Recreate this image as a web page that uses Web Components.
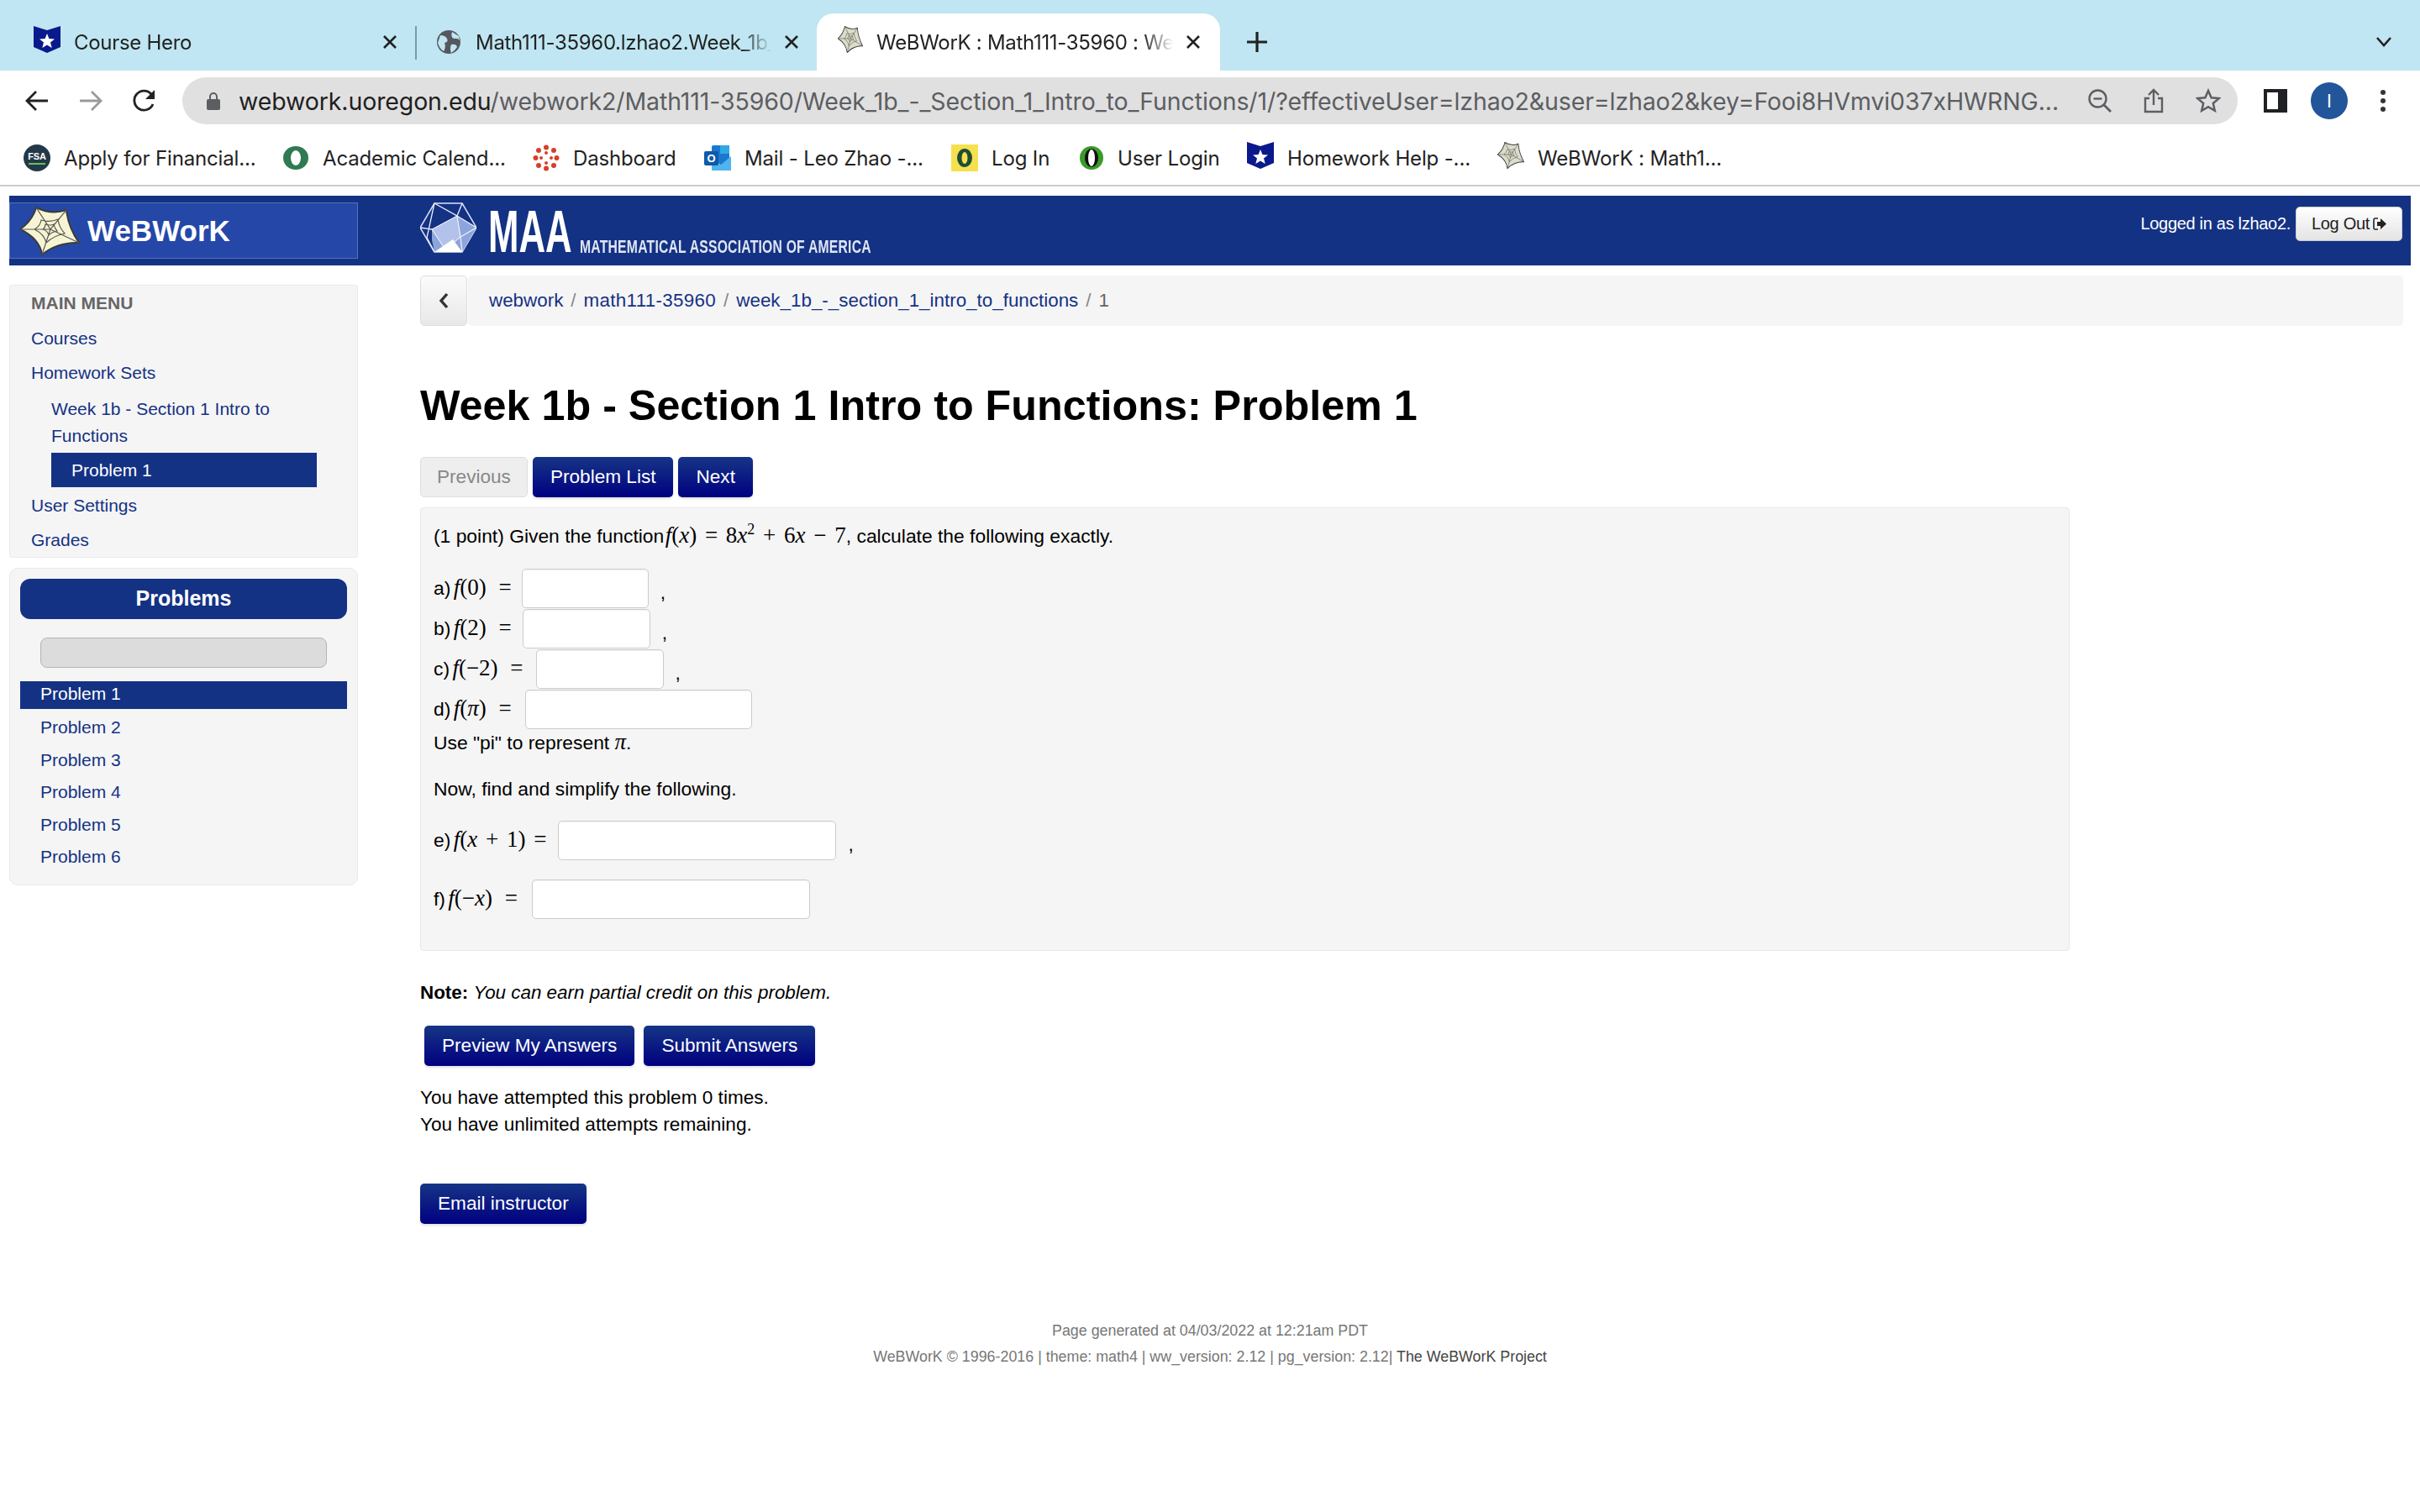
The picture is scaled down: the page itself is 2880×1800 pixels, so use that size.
<!DOCTYPE html>
<html>
<head>
<meta charset="utf-8">
<title>WeBWorK : Math111-35960</title>
<style>
  html, body { margin: 0; background: #fff; font-family: "Liberation Sans", Arial, sans-serif; }
  body { width: 2880px; height: 1800px; overflow: hidden; }
  .page { display: flex; flex-direction: column; }
</style>
</head>
<body>
<div class="page">
  <browser-tabs></browser-tabs>
  <browser-toolbar></browser-toolbar>
  <browser-bookmarks></browser-bookmarks>
  <ww-header></ww-header>
  <ww-layout>
    <ww-sidebar slot="side"></ww-sidebar>
    <ww-problem></ww-problem>
  </ww-layout>
  <ww-footer></ww-footer>
</div>

<script>
// small shared icons, used from several shadow roots
const SHIELD = `<svg width="32" height="32" viewBox="0 0 32 32"><path d="M0 0 L16 5 L32 0 V25 L16 32 L0 25 Z" fill="#0a1a8c"/><path d="M16 9 L18.4 15 L25 15.4 L20 19.4 L21.7 26 L16 22.4 L10.3 26 L12 19.4 L7 15.4 L13.6 15 Z" fill="#fff"/></svg>`;
const STAR = (w, h, fill = "#f6f4d4") => `<svg width="${w}" height="${h}" viewBox="0 0 72 58" preserveAspectRatio="none"><path d="M20 1 Q38 10 56 4 Q58 24 71 43 Q46 42 27 57 Q24 38 1 27 Q16 16 20 1 Z" fill="${fill}" stroke="#3b3b3b" stroke-width="2"/><path d="M20 1 L37 27 L56 4 M37 27 L71 43 M37 27 L27 57 M37 27 L1 27 M26 16 Q37 19 46 15 Q47 24 54 32 Q42 34 32 43 Q30 33 18 27 Q25 23 26 16 Z M31 21 Q37 23 41 21 Q42 26 45 29 Q39 30 35 34 Q34 29 28 27 Q31 25 31 21 Z" fill="none" stroke="#5a5a50" stroke-width="1.2"/></svg>`;

class BrowserTab extends HTMLElement {
  constructor() {
    super();
    this.attachShadow({ mode: "open" });
    this.shadowRoot.innerHTML = `
      <style>
        :host { display: flex; align-items: center; box-sizing: border-box; height: 68px; font: 24px Inter, sans-serif; color: #222; position: relative; }
        :host([active]) { background: #fff; border-radius: 20px 20px 0 0; }
        .text { flex: 1; margin-left: 16px; white-space: nowrap; overflow: hidden; letter-spacing: -0.3px; -webkit-mask-image: linear-gradient(90deg, #000 calc(100% - 36px), transparent); }
        svg.x { flex: none; margin-left: 14px; }
      </style>
      <slot name="icon"></slot>
      <div class="text"><slot></slot></div>
      <svg class="x" width="20" height="20" viewBox="0 0 20 20"><path d="M3 3 L17 17 M17 3 L3 17" stroke="#222" stroke-width="2.6"/></svg>
    `;
  }
}
customElements.define("browser-tab", BrowserTab);

class BrowserTabs extends HTMLElement {
  constructor() {
    super();
    this.attachShadow({ mode: "open" });
    this.shadowRoot.innerHTML = `
      <style>
        :host { display: flex; box-sizing: border-box; height: 84px; padding-top: 16px; background: #bfe6f2; align-items: stretch; position: relative; }
        .t1 { width: 434px; margin-left: 40px; }
        .sep { width: 2px; height: 40px; margin: 15px 24px 0 20px; background: #7d9aa3; flex: none; }
        .t2 { width: 432px; }
        .t3 { width: 480px; margin-left: 20px; padding: 0 22px 0 25px; }
        .plus { margin: 20px 0 0 30px; width: 28px; height: 28px; }
        .chev { margin: 27px 0 0 1317px; }
      </style>
      <browser-tab class="t1"><span slot="icon">${SHIELD}</span>Course Hero</browser-tab>
      <div class="sep"></div>
      <browser-tab class="t2"><svg slot="icon" width="28" height="28" viewBox="0 0 28 28" style="margin-right:2px"><circle cx="14" cy="14" r="14" fill="#55585e"/><path d="M4 6 Q10 6 12 10 Q14 14 9 15 Q11 20 8 25 Q3 22 1 15 Z M18 2 Q16 8 20 10 Q25 9 27 12 L26 7 Z M17 17 Q23 16 24 20 Q21 25 17 27 Q15 22 17 17 Z" fill="#bfe6f2"/></svg>Math111-35960.lzhao2.Week_1b_-_Section_1</browser-tab>
      <browser-tab class="t3" active><span slot="icon">${STAR(30, 32, "#dcdccb")}</span>WeBWorK : Math111-35960 : Week_1b_-_Section</browser-tab>
      <svg class="plus" viewBox="0 0 28 28"><path d="M14 2 V26 M2 14 H26" stroke="#222" stroke-width="3.2"/></svg>
      <svg class="chev" width="20" height="14" viewBox="0 0 20 14"><path d="M2 2 L10 11 L18 2" fill="none" stroke="#222" stroke-width="2.6"/></svg>
    `;
  }
}
customElements.define("browser-tabs", BrowserTabs);

class BrowserToolbar extends HTMLElement {
  constructor() {
    super();
    this.attachShadow({ mode: "open" });
    this.shadowRoot.innerHTML = `
      <style>
        :host { display: flex; align-items: center; height: 72px; box-sizing: border-box; padding: 0 0 0 30px; background: #fff; }
        .nav { display: flex; gap: 36px; width: 187px; align-items: center; flex: none; }
        .bar { width: 2446px; height: 56px; flex: none; box-sizing: border-box; border-radius: 28px; background: #e0e0e0; display: flex; align-items: center; padding-left: 29px; font: 28.5px Inter, sans-serif; color: #5c5e62; white-space: nowrap; }
        .bar b { font-weight: 400; color: #1f1f1f; }
        .url { margin-left: 22px; width: 2166px; overflow: hidden; letter-spacing: -0.11px; flex: none; }
        .end { display: flex; align-items: center; gap: 38px; margin-left: 35px; flex: none; }
        .right { display: flex; align-items: center; margin-left: 31px; }
        .avatar { width: 44px; height: 44px; border-radius: 50%; background: #225599; color: #fff; font: 22px Inter, sans-serif; display: flex; align-items: center; justify-content: center; margin: 0 38px 0 28px; }
      </style>
      <div class="nav">
        <svg width="28" height="26" viewBox="0 0 28 26"><path d="M27 13 H3 M13 2 L2 13 L13 24" fill="none" stroke="#222" stroke-width="2.8"/></svg>
        <svg width="28" height="26" viewBox="0 0 28 26"><path d="M1 13 H25 M15 2 L26 13 L15 24" fill="none" stroke="#9a9a9a" stroke-width="2.8"/></svg>
        <svg width="30" height="30" viewBox="0 0 30 30" style="margin-left:-1px"><path d="M25 19 A11.5 11.5 0 1 1 23 7" fill="none" stroke="#222" stroke-width="2.8"/><path d="M27 2 V13 H16 Z" fill="#222"/></svg>
      </div>
      <div class="bar">
        <svg width="16" height="22" viewBox="0 0 16 22" style="flex:none"><path d="M4 10 V6 A4 4 0 0 1 12 6 V10" fill="none" stroke="#5c5e62" stroke-width="2"/><rect x="0" y="9" width="16" height="13" rx="2" fill="#5c5e62"/></svg>
        <div class="url"><b>webwork.uoregon.edu</b>/webwork2/Math111-35960/Week_1b_-_Section_1_Intro_to_Functions/1/?effectiveUser=lzhao2&amp;user=lzhao2&amp;key=Fooi8HVmvi037xHWRNG...</div>
        <div class="end">
          <svg width="28" height="28" viewBox="0 0 28 28"><circle cx="11.5" cy="11.5" r="10" fill="none" stroke="#5c5e62" stroke-width="2.4"/><path d="M18.5 18.5 L27 27" stroke="#5c5e62" stroke-width="2.8"/><path d="M6.5 11.5 H16.5" stroke="#5c5e62" stroke-width="2.4"/></svg>
          <svg width="24" height="30" viewBox="0 0 24 30"><path d="M12 20 V2 M6 8 L12 2 L18 8" fill="none" stroke="#5c5e62" stroke-width="2.4"/><path d="M7 12 H2 V28 H22 V12 H17" fill="none" stroke="#5c5e62" stroke-width="2.4"/></svg>
          <svg width="30" height="30" viewBox="0 0 30 30"><path d="M15 3 L18.6 11.3 L27.6 12.1 L20.8 18 L22.8 26.8 L15 22.2 L7.2 26.8 L9.2 18 L2.4 12.1 L11.4 11.3 Z" fill="none" stroke="#5c5e62" stroke-width="2.5"/></svg>
        </div>
      </div>
      <div class="right">
        <svg width="28" height="28" viewBox="0 0 28 28"><rect width="28" height="28" fill="#202124"/><rect x="4" y="4" width="13" height="20" fill="#fff"/></svg>
        <div class="avatar">I</div>
        <svg width="8" height="28" viewBox="0 0 8 28"><circle cx="4" cy="4" r="3" fill="#333"/><circle cx="4" cy="14" r="3" fill="#333"/><circle cx="4" cy="24" r="3" fill="#333"/></svg>
      </div>
    `;
  }
}
customElements.define("browser-toolbar", BrowserToolbar);

class BrowserBookmark extends HTMLElement {
  constructor() {
    super();
    this.attachShadow({ mode: "open" });
    this.shadowRoot.innerHTML = `
      <style>
        :host { display: flex; align-items: center; gap: 16px; flex: none; font: 24px Inter, sans-serif; color: #222; white-space: nowrap; letter-spacing: -0.15px; }
        ::slotted(svg), ::slotted(span) { flex: none; display: block; }
      </style>
      <slot name="icon"></slot><slot></slot>
    `;
  }
}
customElements.define("browser-bookmark", BrowserBookmark);

class BrowserBookmarks extends HTMLElement {
  constructor() {
    super();
    const o = (c) => `<svg slot="icon" width="32" height="32" viewBox="0 0 32 32"><ellipse cx="16" cy="16" rx="15" ry="14" fill="${c}"/><ellipse cx="16" cy="16" rx="6" ry="9" fill="#fff"/></svg>`;
    this.attachShadow({ mode: "open" });
    this.shadowRoot.innerHTML = `
      <style>
        :host { display: flex; align-items: center; height: 64px; padding-left: 28px; border-bottom: 2px solid #ccc; box-sizing: content-box; }
        browser-bookmark:nth-of-type(1) { width: 308px; }
        browser-bookmark:nth-of-type(2) { width: 298px; }
        browser-bookmark:nth-of-type(3) { width: 204px; }
        browser-bookmark:nth-of-type(4) { width: 294px; }
        browser-bookmark:nth-of-type(5) { width: 152px; }
        browser-bookmark:nth-of-type(6) { width: 200px; gap: 14px; }
        browser-bookmark:nth-of-type(7) { width: 298px; }
      </style>
      <browser-bookmark><svg slot="icon" width="32" height="32" viewBox="0 0 32 32"><circle cx="16" cy="16" r="16" fill="#23394a"/><text x="16" y="18" text-anchor="middle" font-size="11" font-weight="700" font-family="Liberation Sans" fill="#fff">FSA</text><rect x="6" y="22" width="20" height="2" fill="#6cc24a"/></svg>Apply for Financial...</browser-bookmark>
      <browser-bookmark>${o("#2f7a52")}Academic Calend...</browser-bookmark>
      <browser-bookmark><svg slot="icon" width="32" height="32" viewBox="0 0 32 32"><g fill="#d64027"><circle cx="16" cy="3.5" r="3"/><circle cx="16" cy="28.5" r="3"/><circle cx="3.5" cy="16" r="3"/><circle cx="28.5" cy="16" r="3"/><circle cx="7" cy="7" r="3"/><circle cx="25" cy="7" r="3"/><circle cx="7" cy="25" r="3"/><circle cx="25" cy="25" r="3"/><circle cx="16" cy="10" r="2"/><circle cx="16" cy="22" r="2"/><circle cx="10" cy="16" r="2"/><circle cx="22" cy="16" r="2"/></g></svg>Dashboard</browser-bookmark>
      <browser-bookmark><svg slot="icon" width="32" height="32" viewBox="0 0 32 32"><rect x="9" y="1" width="21" height="30" rx="2" fill="#1a78d0"/><rect x="19" y="1" width="11" height="10" fill="#2fa8e6"/><path d="M9 16 L20 24 L32 14 V31 H9 Z" fill="#50b4ee"/><rect x="0" y="8" width="17" height="17" rx="2" fill="#0f5aa8"/><text x="8.5" y="21" text-anchor="middle" font-size="13" font-weight="700" font-family="Liberation Sans" fill="#fff">O</text></svg>Mail - Leo Zhao -...</browser-bookmark>
      <browser-bookmark><svg slot="icon" width="32" height="32" viewBox="0 0 32 32"><rect width="32" height="32" fill="#f5e04f"/><ellipse cx="16" cy="16" rx="9" ry="11" fill="#1e4d33"/><ellipse cx="16" cy="16" rx="3.5" ry="7" fill="#f5e04f"/></svg>Log In</browser-bookmark>
      <browser-bookmark><svg slot="icon" width="32" height="32" viewBox="0 0 32 32"><ellipse cx="15" cy="16" rx="14" ry="14" fill="#3a9a2a"/><ellipse cx="15" cy="16" rx="8" ry="11" fill="#111"/><ellipse cx="15" cy="16" rx="4" ry="10" fill="#fff"/></svg>User Login</browser-bookmark>
      <browser-bookmark><span slot="icon">${SHIELD}</span>Homework Help -...</browser-bookmark>
      <browser-bookmark><span slot="icon">${STAR(32, 32, "#dcdccb")}</span>WeBWorK : Math1...</browser-bookmark>
    `;
  }
}
customElements.define("browser-bookmarks", BrowserBookmarks);

class WwHeader extends HTMLElement {
  constructor() {
    super();
    this.attachShadow({ mode: "open" });
    this.shadowRoot.innerHTML = `
      <style>
        :host { display: flex; align-items: center; height: 83px; margin: 11px 11px 0; background: #143284; color: #fff; }
        .brand { width: 415px; height: 67px; box-sizing: border-box; flex: none; display: flex; align-items: center; background: #2548a8; border: 1px solid #5571b9; padding-left: 11px; font: 700 35px "Liberation Sans", sans-serif; gap: 9px; }
        .maa { display: flex; align-items: flex-end; margin-left: 74px; height: 60px; position: relative; flex: none; width: 540px; margin-top: -8px; }
        .big { font: 700 70px/50px "Liberation Sans", sans-serif; width: 101px; margin-left: 14px; height: 50px; transform: scaleX(.625); transform-origin: 0 0; }
        .small { font: 700 22px/15px "Liberation Sans", sans-serif; margin-left: 8px; white-space: nowrap; transform: scaleX(.715); transform-origin: 0 100%; color: #dfe5f5; width: 345px; letter-spacing: .3px; }
        .user { margin-left: auto; display: flex; align-items: center; font: 20px "Liberation Sans", sans-serif; gap: 6px; margin-top: -16px; padding-right: 10px; letter-spacing: -.3px; }
        .out { display: flex; align-items: center; gap: 4px; box-sizing: border-box; width: 127px; height: 41px; justify-content: center; border-radius: 5px; border: 1px solid #ccc; background: linear-gradient(#fff, #e4e4e4); color: #222; }
      </style>
      <div class="brand">${STAR(72, 58)}<span>WeBWorK</span></div>
      <div class="maa">
        <svg width="67" height="60" viewBox="0 0 67 60" style="flex:none">
          <path d="M17 1 L50 1 L67 30 L50 59 L17 59 L0 30 Z" fill="#143284" stroke="#dbe3f6" stroke-width="1.5"/>
          <path d="M44 16 L67 30 L50 59 L17 59 L14 45 L14 32 Z" fill="#8ea4dc"/>
          <path d="M14 32 L44 16 L48 41 L30 56 Z" fill="#b3c2ea" stroke="#fff" stroke-width="1"/>
          <path d="M17 59 L39 44 L50 59 Z" fill="#fff"/>
          <path d="M17 1 L8 42 L17 59 M17 1 L44 16 L50 1 M0 30 L14 32 M44 16 L67 30 M48 41 L67 30 M48 41 L50 59" fill="none" stroke="#eef2fc" stroke-width="1.3"/>
        </svg>
        <span class="big">MAA</span><span class="small">MATHEMATICAL ASSOCIATION OF AMERICA</span>
      </div>
      <div class="user">Logged in as lzhao2.
        <div class="out">Log Out <svg width="16" height="15" viewBox="0 0 16 15"><path d="M6 1 H2 Q1 1 1 3 V12 Q1 14 2 14 H6" fill="none" stroke="#222" stroke-width="1.6"/><path d="M5 5 H9 V1 L16 7.5 L9 14 V10 H5 Z" fill="#222"/></svg></div>
      </div>
    `;
  }
}
customElements.define("ww-header", WwHeader);

class WwLayout extends HTMLElement {
  constructor() {
    super();
    this.attachShadow({ mode: "open" });
    this.shadowRoot.innerHTML = `
      <style>
        :host { display: flex; align-items: flex-start; padding: 12px 20px 0 11px; }
        .side { width: 415px; flex: none; padding-top: 11px; }
        .main { margin-left: 74px; flex: 1; min-width: 0; }
      </style>
      <div class="side"><slot name="side"></slot></div>
      <div class="main"><slot></slot></div>
    `;
  }
}
customElements.define("ww-layout", WwLayout);

class WwSidebar extends HTMLElement {
  constructor() {
    super();
    this.attachShadow({ mode: "open" });
    this.shadowRoot.innerHTML = `
      <style>
        :host { display: flex; flex-direction: column; gap: 12px; font: 21px "Liberation Sans", sans-serif; color: #143284; }
        .menu { box-sizing: border-box; height: 325px; background: #f5f5f5; border: 1px solid #ebebeb; border-radius: 3px; padding: 10px 24px 0 25px; }
        .menu div { height: 41.3px; line-height: 41.3px; }
        .menu .h { font-weight: 700; color: #666; height: 22px; line-height: 22px; margin-bottom: 10px; }
        .menu .sub { padding-left: 24px; line-height: 32px; height: 32px; }
        .menu .sub.first { margin-top: 6px; }
        .menu .cur { margin: 4px 0 1px 24px; width: 316px; background: #143284; color: #fff; padding-left: 24px; height: 41px; box-sizing: border-box; }
        .box { box-sizing: border-box; height: 378px; background: #f5f5f5; border: 1px solid #e9e9e9; border-radius: 10px; padding: 12px 12px 0; }
        .title { height: 48px; line-height: 46px; border-radius: 12px; background: #143284; color: #fff; font-weight: 700; font-size: 25px; text-align: center; }
        .bar { margin: 22px 24px 16px; height: 36px; box-sizing: border-box; border: 1px solid #b4b4b4; border-radius: 8px; background: #dcdcdc; }
        ul { list-style: none; margin: 0; padding: 0; }
        li { height: 38.6px; line-height: 37px; padding-left: 24px; }
        li.on { background: #143284; color: #fff; height: 33px; line-height: 30px; margin-bottom: 3px; }
      </style>
      <div class="menu">
        <div class="h">MAIN MENU</div>
        <div>Courses</div>
        <div>Homework Sets</div>
        <div class="sub first">Week 1b - Section 1 Intro to</div>
        <div class="sub">Functions</div>
        <div class="cur">Problem 1</div>
        <div>User Settings</div>
        <div>Grades</div>
      </div>
      <div class="box">
        <div class="title">Problems</div>
        <div class="bar"></div>
        <ul>
          <li class="on">Problem 1</li>
          <li>Problem 2</li>
          <li>Problem 3</li>
          <li>Problem 4</li>
          <li>Problem 5</li>
          <li>Problem 6</li>
        </ul>
      </div>
    `;
  }
}
customElements.define("ww-sidebar", WwSidebar);

// a button of the site: navy gradient by default, grey when disabled
class WwButton extends HTMLElement {
  constructor() {
    super();
    this.attachShadow({ mode: "open" });
    this.shadowRoot.innerHTML = `
      <style>
        :host { display: inline-flex; align-items: center; justify-content: center; box-sizing: border-box; height: 48px; padding: 0 21px; border-radius: 5px; background: linear-gradient(#163586, #000080); color: #fff; font: 22.6px "Liberation Sans", sans-serif; box-shadow: 0 2px 3px rgba(0,0,0,.12); white-space: nowrap; }
        :host([disabled]) { background: #eee; color: #888; border: 1px solid #dedede; box-shadow: none; padding: 0 19px; }
      </style>
      <slot></slot>
    `;
  }
}
customElements.define("ww-button", WwButton);

class WwMath extends HTMLElement {
  constructor() {
    super();
    // no whitespace round the slot: the host is inline, a stray space would show before a comma
    this.attachShadow({ mode: "open" }).innerHTML = `<style>
        :host { display: inline; font: 27px "Liberation Serif", serif; white-space: nowrap; word-spacing: 3px; }
        ::slotted(sup) { font-size: 18px; line-height: 0; }
      </style><slot></slot>`;
  }
}
customElements.define("ww-math", WwMath);

// one row of the problem: label, math, answer box and the trailing comma
class WwAnswer extends HTMLElement {
  constructor() {
    super();
    this.attachShadow({ mode: "open" });
    const w = this.getAttribute("w");
    const gap = this.getAttribute("gap");
    const tail = this.hasAttribute("comma") ? `<span class="c">,</span>` : "";
    this.shadowRoot.innerHTML = `
      <style>
        :host { display: flex; align-items: center; height: 48px; }
        .l { margin-top: -2px; }
        input { box-sizing: border-box; height: 47px; width: ${w}px; margin: 0 0 0 ${gap}px; border: 1px solid #ccc; border-radius: 5px; background: #fff; box-shadow: inset 0 1px 1px rgba(0,0,0,.06); padding: 0; }
        .c { margin-left: 14px; margin-top: 10px; }
        ::slotted(ww-math) { margin-left: -3px; }
      </style>
      <span class="l"><slot></slot></span><input type="text" aria-label="answer">${tail}
    `;
  }
}
customElements.define("ww-answer", WwAnswer);

class WwProblem extends HTMLElement {
  constructor() {
    super();
    this.attachShadow({ mode: "open" });
    this.shadowRoot.innerHTML = `
      <style>
        :host { display: block; font: 22.4px "Liberation Sans", sans-serif; color: #000; }
        .crumb { display: flex; height: 60px; }
        .back { box-sizing: border-box; width: 56px; border: 1px solid #ddd; border-radius: 5px; background: linear-gradient(#fbfbfb, #e8e8e8); display: flex; align-items: center; justify-content: center; flex: none; }
        .path { flex: 1; margin-left: 1px; background: #f5f5f5; border-radius: 5px; display: flex; align-items: center; padding-left: 25px; color: #143284; gap: 9px; font-size: 22.4px; }
        .path i { font-style: normal; color: #888; }
        .path span { letter-spacing: .3px; }
        h1 { font: 700 50.3px/64px "Liberation Sans", sans-serif; margin: 63px 0 29px; }
        .nav { display: flex; gap: 6px; height: 48px; }
        .box { box-sizing: border-box; height: 528px; width: 1963px; margin-top: 12px; padding: 0 15px; background: #f5f5f5; border: 1px solid #e8e8e8; border-radius: 4px; font-size: 22.85px; }
        .box p { margin: 0; line-height: 30px; }
        .q { padding-top: 17px; margin-bottom: 24px !important; height: 30px; }
        .q ww-math { margin-left: -5px; }
        .group { display: flex; flex-direction: column; }
        .pi { height: 30px; }
        .now { margin-top: 26px !important; margin-bottom: 22px !important; }
        .note { margin: 35px 0 24px; line-height: 30px; }
        .acts { display: flex; gap: 11px; padding-left: 5px; }
        .tries { margin: 22px 0 54px; line-height: 32px; font-size: 22.6px; }
      </style>
      <div class="crumb">
        <div class="back"><svg width="12" height="20" viewBox="0 0 12 20"><path d="M10 2 L3 10 L10 18" fill="none" stroke="#333" stroke-width="3.4"/></svg></div>
        <div class="path">webwork <i>/</i> <span>math111-35960</span> <i>/</i> week_1b_-_section_1_intro_to_functions <i>/</i> <i style="color:#666">1</i></div>
      </div>
      <h1>Week 1b - Section 1 Intro to Functions: Problem 1</h1>
      <div class="nav">
        <ww-button disabled>Previous</ww-button><ww-button>Problem List</ww-button><ww-button>Next</ww-button>
      </div>
      <div class="box">
        <p class="q">(1 point) Given the function <ww-math><i>f</i>(<i>x</i>) = 8<i>x</i><sup>2</sup> + 6<i>x</i> &minus; 7</ww-math>, calculate the following exactly.</p>
        <div class="group">
          <ww-answer w="151" gap="12" comma>a) <ww-math style="word-spacing:8px"><i>f</i>(0) =</ww-math></ww-answer>
          <ww-answer w="152" gap="13" comma>b) <ww-math style="word-spacing:8px"><i>f</i>(2) =</ww-math></ww-answer>
          <ww-answer w="152" gap="15" comma>c) <ww-math style="word-spacing:8px"><i>f</i>(&minus;2) =</ww-math></ww-answer>
          <ww-answer w="270" gap="16">d) <ww-math style="word-spacing:8px"><i>f</i>(<i>&pi;</i>) =</ww-math></ww-answer>
        </div>
        <p class="pi">Use "pi" to represent <ww-math><i>&pi;</i></ww-math>.</p>
        <p class="now" style="margin-top:25px">Now, find and simplify the following.</p>
        <div class="group" style="gap:22px">
          <ww-answer w="331" gap="14" comma>e) <ww-math><i>f</i>(<i>x</i> + 1) =</ww-math></ww-answer>
          <ww-answer w="331" gap="17">f) <ww-math style="word-spacing:8px"><i>f</i>(&minus;<i>x</i>) =</ww-math></ww-answer>
        </div>
      </div>
      <p class="note"><b>Note:</b> <i>You can earn partial credit on this problem.</i></p>
      <div class="acts"><ww-button>Preview My Answers</ww-button><ww-button>Submit Answers</ww-button></div>
      <div class="tries">You have attempted this problem 0 times.<br>You have unlimited attempts remaining.</div>
      <ww-button>Email instructor</ww-button>
    `;
  }
}
customElements.define("ww-problem", WwProblem);

class WwFooter extends HTMLElement {
  constructor() {
    super();
    this.attachShadow({ mode: "open" });
    this.shadowRoot.innerHTML = `
      <style>
        :host { display: block; margin-top: 112px; text-align: center; font: 17.85px/31px "Liberation Sans", sans-serif; color: #777; }
        span { color: #444; }
      </style>
      <div>Page generated at 04/03/2022 at 12:21am PDT</div>
      <div>WeBWorK &copy; 1996-2016 | theme: math4 | ww_version: 2.12 | pg_version: 2.12| <span>The WeBWorK Project</span></div>
    `;
  }
}
customElements.define("ww-footer", WwFooter);
</script>
</body>
</html>
